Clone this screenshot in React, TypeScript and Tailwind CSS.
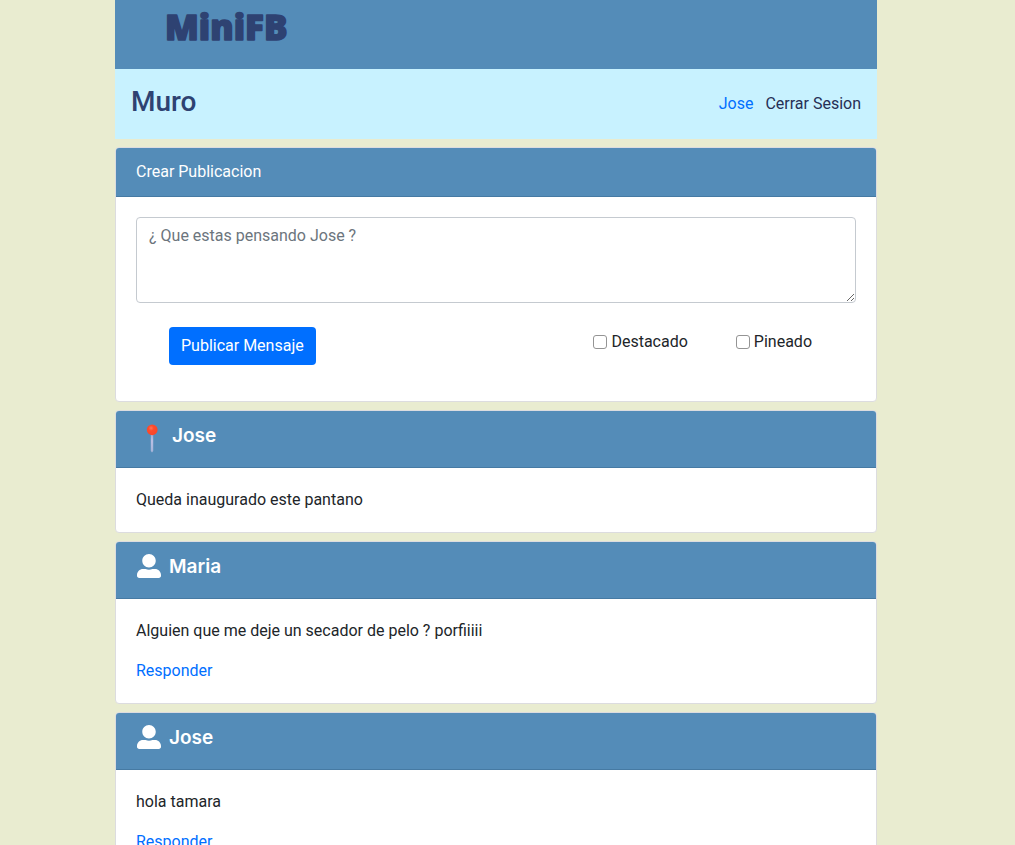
import type { ReactNode } from "react";
import { FaUserAlt } from "react-icons/fa";

type Post = { author: string; text: string; pinned?: boolean };

const posts: Post[] = [
  { author: "Jose", text: "Queda inaugurado este pantano", pinned: true },
  { author: "Maria", text: "Alguien que me deje un secador de pelo ? porfiiiii" },
  { author: "Jose", text: "hola tamara" },
];

function Logo() {
  return (
    <svg width="150" height="60" viewBox="0 0 150 60" role="img" aria-label="MiniFB">
      <text
        x="4"
        y="36"
        fontSize="35"
        fontWeight="800"
        fill="#2e4272"
        stroke="#2e4272"
        strokeWidth="1.5"
        strokeLinejoin="round"
        className="font-['Open_Sans',sans-serif]"
      >
        MiniFB
      </text>
    </svg>
  );
}

function PinIcon() {
  return (
    <svg width="32" height="32" viewBox="0 0 32 32" aria-hidden="true">
      <defs>
        <radialGradient id="pin-head" cx="0.4" cy="0.35" r="0.7">
          <stop offset="0" stopColor="#ff7458" />
          <stop offset="0.35" stopColor="#ff4b2b" />
          <stop offset="1" stopColor="#f8452a" />
        </radialGradient>
        <linearGradient id="pin-stem" x1="0" y1="0" x2="0" y2="1">
          <stop offset="0" stopColor="#9aa5cf" />
          <stop offset="0.4" stopColor="#b9bfe4" />
          <stop offset="1" stopColor="#a5b4d8" />
        </linearGradient>
      </defs>
      <path d="M14.8 10h2.4v18L16 29.5l-1.2-1.5z" fill="url(#pin-stem)" />
      <circle cx="16.2" cy="6.8" r="5.4" fill="url(#pin-head)" />
    </svg>
  );
}

function Card({ header, children }: { header: ReactNode; children: ReactNode }) {
  return (
    <section className="mt-2 rounded border border-[#dcdcdf] bg-white">
      <header className="rounded-t-[3px] border-b border-[#467aa3] bg-[#548cb8] px-5 text-white">
        {header}
      </header>
      <div className="p-5">{children}</div>
    </section>
  );
}

function Option({ label }: { label: string }) {
  return (
    <label className="flex items-center gap-1">
      <input
        type="checkbox"
        className="size-3.5 appearance-none rounded-[3px] border border-[#949494] bg-white checked:border-[#006fff] checked:bg-[#006fff]"
      />
      {label}
    </label>
  );
}

function PostCard({ post }: { post: Post }) {
  return (
    <Card
      header={
        <div className="flex h-14 items-start pt-3">
          {post.pinned ? (
            <span className="mr-1">
              <PinIcon />
            </span>
          ) : (
            <FaUserAlt className="mr-2 ml-px size-6" aria-hidden="true" />
          )}
          <h2 className="font-[Inter,sans-serif] text-[19px] leading-[26px] font-semibold">{post.author}</h2>
        </div>
      }
    >
      <p>{post.text}</p>
      {!post.pinned && (
        <a href="#responder" className="mt-4 block w-fit text-[#006fff]">
          Responder
        </a>
      )}
    </Card>
  );
}

export default function App() {
  return (
    <div className="min-h-screen bg-[#e9ecd0] pr-[138px] pl-[115px] font-[Roboto,sans-serif] text-base leading-6 text-[#212529]">
      <header className="h-[69px] bg-[#548cb8] pt-1 pl-[46px]">
        <Logo />
      </header>
      <nav className="flex h-[70px] items-center justify-between bg-[#c8f2ff] px-4">
        <h1 className="pb-1 text-[28px] leading-8 font-medium text-[#2e4272]">Muro</h1>
        <div className="flex gap-3">
          <a href="#jose" className="text-[#006fff]">
            Jose
          </a>
          <a href="#salir" className="text-[#262f55]">
            Cerrar Sesion
          </a>
        </div>
      </nav>
      <main>
        <Card header={<h2 className="py-3">Crear Publicacion</h2>}>
          <form>
            <textarea
              aria-label="Mensaje"
              placeholder="¿ Que estas pensando Jose ?"
              className="block h-[86px] w-full rounded border border-[#c5cad0] bg-white px-3 py-1.5 placeholder:text-[#6c757d]"
            />
            <div className="mt-6 flex items-start justify-between pr-11 pb-4 pl-[33px]">
              <button type="button" className="h-[38px] rounded bg-[#006fff] px-3 text-white">
                Publicar Mensaje
              </button>
              <div className="flex gap-12 pt-[3px]">
                <Option label="Destacado" />
                <Option label="Pineado" />
              </div>
            </div>
          </form>
        </Card>
        {posts.map((post, index) => (
          <PostCard key={index} post={post} />
        ))}
      </main>
    </div>
  );
}
